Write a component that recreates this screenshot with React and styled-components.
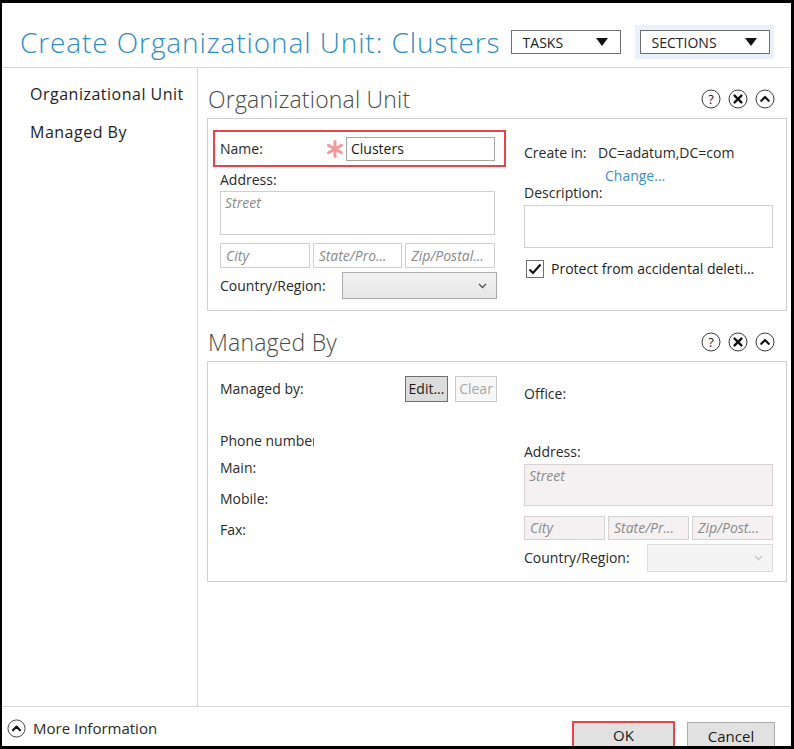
import React from 'react';
import styled, { createGlobalStyle } from 'styled-components';

const GlobalStyle = createGlobalStyle`
  html, body {
    margin: 0;
    padding: 0;
    background: #000;
  }
  body {
    font-family: "Open Sans", "Noto Sans", "Liberation Sans", sans-serif;
    color: #262626;
  }
`;

const HelpIcon = () => (
  <svg width="20" height="20" viewBox="0 0 20 20">
    <circle cx="10" cy="10" r="9" fill="#fff" stroke="#3a3a3a" strokeWidth="1" />
    <text x="10" y="14.5" textAnchor="middle" fontSize="13" fontFamily="Open Sans, sans-serif" fill="#222">?</text>
  </svg>
);
const CloseIcon = () => (
  <svg width="20" height="20" viewBox="0 0 20 20">
    <circle cx="10" cy="10" r="9" fill="#fff" stroke="#3a3a3a" strokeWidth="1" />
    <path d="M6.6 6.6 L13.4 13.4 M13.4 6.6 L6.6 13.4" stroke="#111" strokeWidth="2.4" strokeLinecap="round" />
  </svg>
);
const CollapseIcon = ({ size = 20 }) => (
  <svg width={size} height={size} viewBox="0 0 20 20">
    <circle cx="10" cy="10" r="9" fill="#fff" stroke="#3a3a3a" strokeWidth="1" />
    <path d="M6.3 11.8 L10 8 L13.7 11.8" fill="none" stroke="#111" strokeWidth="2.2" strokeLinecap="round" strokeLinejoin="round" />
  </svg>
);
const Asterisk = () => (
  <svg width="18" height="18" viewBox="0 0 18 18">
    <path d="M9 1.5 V16.5 M2.5 5.2 L15.5 12.8 M15.5 5.2 L2.5 12.8" stroke="#f2999b" strokeWidth="3" strokeLinecap="round" />
  </svg>
);
const Chevron = ({ color }) => (
  <svg width="9" height="6" viewBox="0 0 9 6">
    <path d="M1 1 L4.5 4.5 L8 1" fill="none" stroke={color} strokeWidth="1.3" />
  </svg>
);
const CheckMark = () => (
  <svg width="14" height="12" viewBox="0 0 14 12">
    <path d="M1.5 6.5 L5 10 L12.5 1.5" fill="none" stroke="#111" strokeWidth="2.2" />
  </svg>
);

const Frame = styled.div`
  width: 794px;
  height: 749px;
  box-sizing: border-box;
  border-style: solid;
  border-color: #000;
  border-width: 3px 3px 3px 2px;
  background: #fff;
  display: flex;
  flex-direction: column;
  overflow: hidden;
`;

const Header = styled.div`
  height: 65px;
  flex-shrink: 0;
  box-sizing: border-box;
  border-bottom: 1px solid #d6d6d6;
  display: flex;
  align-items: center;
  padding: 14px 0 0 18px;
`;

const Title = styled.h1`
  margin: 0 10px 0 0;
  font-size: 28px;
  letter-spacing: 0.9px;
  font-weight: 300;
  color: #2f8dc0;
  white-space: nowrap;
`;

const DropButton = styled.div`
  width: ${p => p.$w}px;
  height: 24px;
  box-sizing: border-box;
  border: 1px solid #6e6e6e;
  background: #fff;
  display: flex;
  align-items: center;
  justify-content: space-between;
  padding: 0 12px 0 11px;
  font-size: 14px;
  color: #222;
`;

const Triangle = styled.span`
  width: 0;
  height: 0;
  border-left: 6px solid transparent;
  border-right: 6px solid transparent;
  border-top: 8px solid #111;
`;

const SectionsWrap = styled.div`
  margin-left: 14px;
  padding: 5px 4px 5px 5px;
  background: #ebf1fb;
`;

const Body = styled.div`
  flex: 1;
  display: flex;
  min-height: 0;
  border-bottom: 1px solid #d6d6d6;
`;

const Nav = styled.div`
  width: 196px;
  flex-shrink: 0;
  box-sizing: border-box;
  border-right: 1px solid #d6d6d6;
  padding: 16px 0 0 28px;
`;

const NavItem = styled.div`
  font-size: 16px;
  letter-spacing: 0.5px;
  line-height: 20px;
  margin-bottom: 18px;
  color: #1e1e1e;
  white-space: nowrap;
`;

const Main = styled.div`
  flex: 1;
  padding: 12px 4px 0 9px;
`;

const Section = styled.div`
  margin-bottom: 12px;
`;

const SectionHead = styled.div`
  height: 38px;
  display: flex;
  align-items: center;
  justify-content: space-between;
  padding-right: 12px;
`;

const SectionTitle = styled.h2`
  margin: 0 0 0 1px;
  font-size: 23px;
  letter-spacing: 0.2px;
  font-weight: 300;
  color: #4a4a4a;
`;

const IconRow = styled.div`
  display: flex;
  gap: 7px;
`;

const SectionBox = styled.div`
  border: 1px solid #d0d0d0;
  display: flex;
  padding: ${p => p.$pt}px 13px ${p => p.$pb}px 5px;
`;

const LeftCol = styled.div`
  width: 293px;
  flex-shrink: 0;
`;

const RightCol = styled.div`
  flex: 1;
  margin-left: 18px;
  min-width: 0;
`;

const NameRow = styled.div`
  height: 37px;
  box-sizing: border-box;
  border: 2px solid #e8444c;
  display: flex;
  align-items: center;
  padding: 0 9px 0 5px;
`;

const Label = styled.div`
  font-size: 14px;
  line-height: ${p => p.$lh || 20}px;
  color: #2a2a2a;
  white-space: nowrap;
  overflow: hidden;
  flex-shrink: 0;
  width: ${p => (p.$w ? `${p.$w}px` : 'auto')};
  margin-top: ${p => p.$mt || 0}px;
  padding-left: ${p => p.$pl || 0}px;
`;

const StarCell = styled.div`
  width: 20px;
  display: flex;
  align-items: center;
`;

const TextBox = styled.div`
  flex: 1;
  height: ${p => p.$h}px;
  box-sizing: border-box;
  border: 1px solid ${p => (p.$off ? '#d6d2d4' : p.$strong ? '#a6a6a6' : '#cfcfcf')};
  background: ${p => (p.$off ? '#f5f1f3' : '#fff')};
  font-size: 14px;
  line-height: 20px;
  padding: 1px 4px;
  color: #1a1a1a;
  font-style: ${p => (p.$ph ? 'italic' : 'normal')};
  ${p => p.$ph && 'color: #8a8a8a;'}
  white-space: nowrap;
  overflow: hidden;
`;

const Block = styled.div`
  display: flex;
  margin: ${p => p.$mt || 0}px ${p => p.$mr || 0}px 0 ${p => p.$ml || 0}px;
`;

const AddrGrid = styled.div`
  display: grid;
  grid-template-columns: repeat(3, 1fr);
  gap: ${p => p.$gap}px;
  margin: ${p => p.$mt}px ${p => p.$mr || 0}px 0 ${p => p.$ml || 0}px;
`;

const AddrCell = styled.div`
  height: ${p => p.$h}px;
  box-sizing: border-box;
  border: 1px solid ${p => (p.$off ? '#d6d2d4' : '#cfcfcf')};
  background: ${p => (p.$off ? '#f5f1f3' : '#fff')};
  font-size: 14px;
  font-style: italic;
  color: #8a8a8a;
  line-height: ${p => p.$h - 2}px;
  padding: 0 5px;
  white-space: nowrap;
  overflow: hidden;
`;

const CountryRow = styled.div`
  display: flex;
  align-items: center;
  margin-top: ${p => p.$mt}px;
  padding-left: ${p => p.$pl || 0}px;
`;

const Select = styled.div`
  width: ${p => p.$w}px;
  height: ${p => p.$h}px;
  box-sizing: border-box;
  border: 1px solid ${p => (p.$off ? '#dcdcdc' : '#acacac')};
  background: ${p => (p.$off ? '#f4f4f4' : 'linear-gradient(#f2f2f2, #e6e6e6)')};
  display: flex;
  align-items: center;
  justify-content: flex-end;
  padding-right: 9px;
`;

const LinkText = styled.div`
  font-size: 14px;
  line-height: 17px;
  color: #3a8fbf;
  margin: 4px 0 0 81px;
`;

const CheckRow = styled.div`
  display: flex;
  align-items: center;
  margin: 11px 0 0 2px;
  font-size: 14px;
  white-space: nowrap;
  color: #1e1e1e;
`;

const CheckBox = styled.div`
  width: 18px;
  height: 18px;
  box-sizing: border-box;
  border: 1px solid #707070;
  background: #fff;
  display: flex;
  align-items: center;
  justify-content: center;
  margin-right: 7px;
`;

const SmallButton = styled.div`
  height: 26px;
  width: ${p => p.$w}px;
  box-sizing: border-box;
  border: 1px solid ${p => (p.$off ? '#c8c8c8' : '#6e6e6e')};
  background: ${p => (p.$off ? '#f7f7f7' : '#dcdcdc')};
  color: ${p => (p.$off ? '#a8a8a8' : '#1a1a1a')};
  font-size: 14px;
  line-height: 24px;
  text-align: center;
  margin-left: ${p => p.$ml || 0}px;
`;

const ButtonRow = styled.div`
  display: flex;
  align-items: center;
`;

const Footer = styled.div`
  height: 39px;
  flex-shrink: 0;
  display: flex;
  align-items: flex-start;
  padding: 0 16px 0 5px;
  overflow: hidden;
`;

const MoreInfo = styled.div`
  display: flex;
  align-items: center;
  gap: 7px;
  margin-top: 11px;
  font-size: 15px;
  color: #2a2a2a;
`;

const DialogButtons = styled.div`
  margin-left: auto;
  display: flex;
  gap: 12px;
  margin-top: 14px;
`;

const DialogButton = styled.div`
  width: ${p => p.$w}px;
  height: 30px;
  box-sizing: border-box;
  border: ${p => (p.$hl ? '2px solid #e8444c' : '1px solid #adadad')};
  background: #e1e1e1;
  font-size: 15px;
  line-height: ${p => (p.$hl ? 24 : 26)}px;
  text-align: center;
  color: #1a1a1a;
  margin-top: ${p => (p.$hl ? 0 : 1)}px;
`;

const SectionIcons = () => (
  <IconRow>
    <HelpIcon />
    <CloseIcon />
    <CollapseIcon />
  </IconRow>
);

export default function App() {
  return (
    <>
      <GlobalStyle />
      <Frame>
        <Header>
          <Title>Create Organizational Unit: Clusters</Title>
          <DropButton $w={110}>TASKS<Triangle /></DropButton>
          <SectionsWrap>
            <DropButton $w={130}>SECTIONS<Triangle /></DropButton>
          </SectionsWrap>
        </Header>

        <Body>
          <Nav>
            <NavItem>Organizational Unit</NavItem>
            <NavItem>Managed By</NavItem>
          </Nav>

          <Main>
            <Section>
              <SectionHead>
                <SectionTitle>Organizational Unit</SectionTitle>
                <SectionIcons />
              </SectionHead>
              <SectionBox $pt={11} $pb={11}>
                <LeftCol>
                  <NameRow>
                    <Label $w={106}>Name:</Label>
                    <StarCell><Asterisk /></StarCell>
                    <TextBox $h={24} $strong>Clusters</TextBox>
                  </NameRow>
                  <Label $mt={3} $pl={7}>Address:</Label>
                  <Block $mt={1} $ml={7} $mr={11}>
                    <TextBox $h={44} $ph>Street</TextBox>
                  </Block>
                  <AddrGrid $mt={8} $ml={7} $mr={11} $gap={3}>
                    <AddrCell $h={25}>City</AddrCell>
                    <AddrCell $h={25}>State/Pro...</AddrCell>
                    <AddrCell $h={25}>Zip/Postal...</AddrCell>
                  </AddrGrid>
                  <CountryRow $mt={4} $pl={7}>
                    <Label $w={122}>Country/Region:</Label>
                    <Select $w={155} $h={27}><Chevron color="#555" /></Select>
                  </CountryRow>
                </LeftCol>
                <RightCol>
                  <Block $mt={13}>
                    <Label $w={74}>Create in:</Label>
                    <Label>DC=adatum,DC=com</Label>
                  </Block>
                  <LinkText>Change...</LinkText>
                  <Label $lh={17}>Description:</Label>
                  <Block $mt={4}>
                    <TextBox $h={43} />
                  </Block>
                  <CheckRow>
                    <CheckBox><CheckMark /></CheckBox>
                    Protect from accidental deleti...
                  </CheckRow>
                </RightCol>
              </SectionBox>
            </Section>

            <Section>
              <SectionHead>
                <SectionTitle>Managed By</SectionTitle>
                <SectionIcons />
              </SectionHead>
              <SectionBox $pt={14} $pb={9}>
                <LeftCol>
                  <ButtonRow>
                    <Label $w={185} $pl={7}>Managed by:</Label>
                    <SmallButton $w={43}>Edit...</SmallButton>
                    <SmallButton $w={42} $ml={7} $off>Clear</SmallButton>
                  </ButtonRow>
                  <Label $w={94} $pl={7} $mt={29}>Phone number:</Label>
                  <Label $pl={7} $mt={7}>Main:</Label>
                  <Label $pl={7} $mt={11}>Mobile:</Label>
                  <Label $pl={7} $mt={11}>Fax:</Label>
                </LeftCol>
                <RightCol>
                  <Label $mt={8}>Office:</Label>
                  <Label $mt={38}>Address:</Label>
                  <Block $mt={2}>
                    <TextBox $h={42} $ph $off>Street</TextBox>
                  </Block>
                  <AddrGrid $mt={10} $gap={3}>
                    <AddrCell $h={24} $off>City</AddrCell>
                    <AddrCell $h={24} $off>State/Pr...</AddrCell>
                    <AddrCell $h={24} $off>Zip/Post...</AddrCell>
                  </AddrGrid>
                  <CountryRow $mt={4}>
                    <Label $w={123}>Country/Region:</Label>
                    <Select $w={126} $h={28} $off><Chevron color="#c4c4c4" /></Select>
                  </CountryRow>
                </RightCol>
              </SectionBox>
            </Section>
          </Main>
        </Body>

        <Footer>
          <MoreInfo>
            <CollapseIcon size={19} />
            More Information
          </MoreInfo>
          <DialogButtons>
            <DialogButton $w={103} $hl>OK</DialogButton>
            <DialogButton $w={88}>Cancel</DialogButton>
          </DialogButtons>
        </Footer>
      </Frame>
    </>
  );
}
